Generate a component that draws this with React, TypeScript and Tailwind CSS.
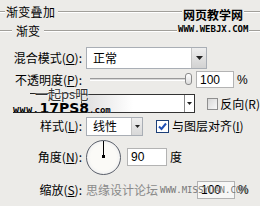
import React from "react";

const Etch = ({ className = "" }: { className?: string }) => (
  <div className={"h-[2px] border-t border-t-[#a19f9a] border-b border-b-white " + className} />
);

const Arrow = () => (
  <svg width="7" height="4" viewBox="0 0 7 4">
    <path d="M0 0H7L3.5 4Z" fill="#222" />
  </svg>
);

export default function App() {
  return (
    <div className="relative w-[260px] h-[206px] overflow-hidden bg-[#ecebe8] text-[12px] leading-[14px] text-black font-['Noto_Sans_CJK_SC','Noto_Sans',sans-serif]">
      {/* title */}
      <div className="flex items-center h-[16px] mt-[4px]">
        <Etch className="w-[5px]" />
        <span className="pl-[1px] pr-[3px] tracking-[0.3px]">渐变叠加</span>
        <Etch className="flex-1" />
      </div>
      {/* subtitle */}
      <div className="flex items-center h-[14px] mt-[4px]">
        <Etch className="w-[12px]" />
        <span className="px-[4px]">渐变</span>
        <Etch className="flex-1" />
      </div>

      {/* blend mode */}
      <div className="flex items-center h-[22px] mt-[9px]">
        <div className="w-[82px] text-right">
          混合模式(<span className="underline">O</span>):
        </div>
        <div className="ml-[4px] w-[121px] h-[22px] bg-white border border-[#a9aeb5] flex items-center">
          <span className="flex-1 pl-[6px]">正常</span>
          <div className="w-[15px] h-full bg-gradient-to-b from-[#eeeeee] to-[#d2d2d2] border-l border-[#c4c4c4] flex items-center justify-center">
            <Arrow />
          </div>
        </div>
      </div>

      {/* opacity */}
      <div className="flex items-center h-[17px] mt-[2px]">
        <div className="w-[82px] text-right">
          不透明度(<span className="underline">P</span>):
        </div>
        <div className="relative ml-[4px] w-[106px] h-[17px] flex items-center">
          <div className="ml-[4px] w-[98px] h-[3px] border-t border-t-[#9a9a9a] bg-[#d8d8d8] border-b border-b-white" />
          <div className="absolute left-[99px] top-[2px] w-[7px] h-[12px] rounded-[3px] border border-[#8a8a8a] bg-gradient-to-b from-white to-[#dcdcdc]" />
        </div>
        <div className="ml-[4px] w-[38px] h-[17px] bg-white border border-[#b3b3b3] flex items-center pl-[3px] font-['Liberation_Sans',sans-serif] text-[12px]">
          100
        </div>
        <span className="ml-[3px] font-['Liberation_Sans',sans-serif]">%</span>
      </div>

      {/* gradient */}
      <div className="flex items-center h-[19px] mt-[6px]">
        <div className="w-[82px]" />
        <div className="ml-[4px] w-[121px] h-[19px] border border-[#333] bg-white flex">
          <div className="flex-1 bg-gradient-to-r from-[#dedede] via-white to-white" />
          <div className="w-[10px] border-l border-[#888] bg-white flex items-center justify-center">
            <svg width="5" height="3" viewBox="0 0 5 3">
              <path d="M0 0H5L2.5 3Z" fill="#222" />
            </svg>
          </div>
        </div>
        <div className="ml-[12px] w-[12px] h-[12px] border border-[#8f8f8f] bg-gradient-to-br from-[#d8d8d8] to-[#f8f8f8]" />
        <span className="ml-[2px] whitespace-nowrap">反向(R)</span>
      </div>

      {/* style */}
      <div className="flex items-center h-[18px] mt-[4px]">
        <div className="w-[82px] text-right">
          样式(<span className="underline">L</span>):
        </div>
        <div className="ml-[4px] w-[57px] h-[19px] bg-white border border-[#a9aeb5] flex items-center">
          <span className="flex-1 pl-[6px]">线性</span>
          <div className="w-[11px] h-full border-l border-[#c4c4c4] bg-gradient-to-b from-[#eeeeee] to-[#d8d8d8] flex items-center justify-center">
            <svg width="5" height="3" viewBox="0 0 5 3">
              <path d="M0 0H5L2.5 3Z" fill="#222" />
            </svg>
          </div>
        </div>
        <div className="ml-[13px] w-[13px] h-[13px] border border-[#1c3f78] bg-white flex items-center justify-center">
          <svg width="9" height="9" viewBox="0 0 9 9">
            <path d="M1 4.5L3.5 7L8 1.5" stroke="#1f4fb5" strokeWidth="2" fill="none" />
          </svg>
        </div>
        <span className="ml-[3px] whitespace-nowrap">
          与图层对齐(<span className="underline">I</span>)
        </span>
      </div>

      {/* angle */}
      <div className="flex items-center h-[34px] mt-[5px]">
        <div className="w-[82px] text-right">
          角度(<span className="underline">N</span>):
        </div>
        <div className="relative ml-[4px] w-[35px] h-[35px] rounded-full border-[1.5px] border-[#5a5f6a] bg-[radial-gradient(circle,#fbfaf7_55%,#e2e4ea_100%)]">
          <div className="absolute left-[15.5px] top-0 w-[1.5px] h-[16px] bg-black" />
          <div className="absolute left-[14.5px] top-[14.5px] w-[3px] h-[3px] bg-black" />
        </div>
        <div className="ml-[6px] w-[40px] h-[18px] bg-white border border-[#b3b3b3] flex items-center pl-[3px] font-['Liberation_Sans',sans-serif]">
          90
        </div>
        <span className="ml-[3px]">度</span>
      </div>

      {/* scale */}
      <div className="flex items-center h-[18px] mt-[7px]">
        <div className="w-[82px] text-right">
          缩放(<span className="underline">S</span>):
        </div>
        <div className="ml-[4px] w-[111px] text-[#8a8a8a] whitespace-nowrap">思缘设计论坛</div>
        <div className="w-[38px] h-[18px] bg-white/60 border border-[#b3b3b3] flex items-center pl-[3px] font-['Liberation_Sans',sans-serif]">
          100
        </div>
        <span className="ml-[3px] font-['Liberation_Sans',sans-serif]">%</span>
      </div>

      {/* watermarks */}
      <div className="absolute left-[182px] top-[8px] px-[1px] bg-[#ecebe8] text-[12px] leading-[14px] font-bold">
        网页教学网
      </div>
      <div className="absolute left-[177px] top-[25px] px-[1px] bg-[#ecebe8] text-[9px] leading-[8px] font-bold font-['DejaVu_Sans_Mono',monospace]">
        WWW.WEBJX.COM
      </div>

      <div className="absolute left-[30px] top-[93px] w-[57px] h-[1px] bg-[#222]" />
      <div className="absolute left-[35px] top-[86px] text-[13px] leading-[16px] text-[#333] [text-shadow:0_0_2px_#fff,0_0_2px_#fff]">
        一起ps吧
      </div>
      <div className="absolute left-[13px] top-[101px] flex items-end leading-none font-bold text-black [text-shadow:0_0_1px_#fff]">
        <span className="text-[10px] font-['DejaVu_Sans_Mono',monospace] tracking-[0.6px]">www.</span>
        <span className="text-[14px] font-['DejaVu_Sans',sans-serif]">17PS8</span>
        <span className="text-[9px] font-['DejaVu_Sans_Mono',monospace]">.com</span>
      </div>
      <div className="absolute left-[13px] top-[112px] w-[74px] h-[1px] bg-[#222]" />

      <div className="absolute left-[160px] top-[186px] text-[9px] leading-[8px] text-[#777] font-['DejaVu_Sans_Mono',monospace] whitespace-nowrap">
        WWW.MISSYUAN.COM
      </div>
    </div>
  );
}
